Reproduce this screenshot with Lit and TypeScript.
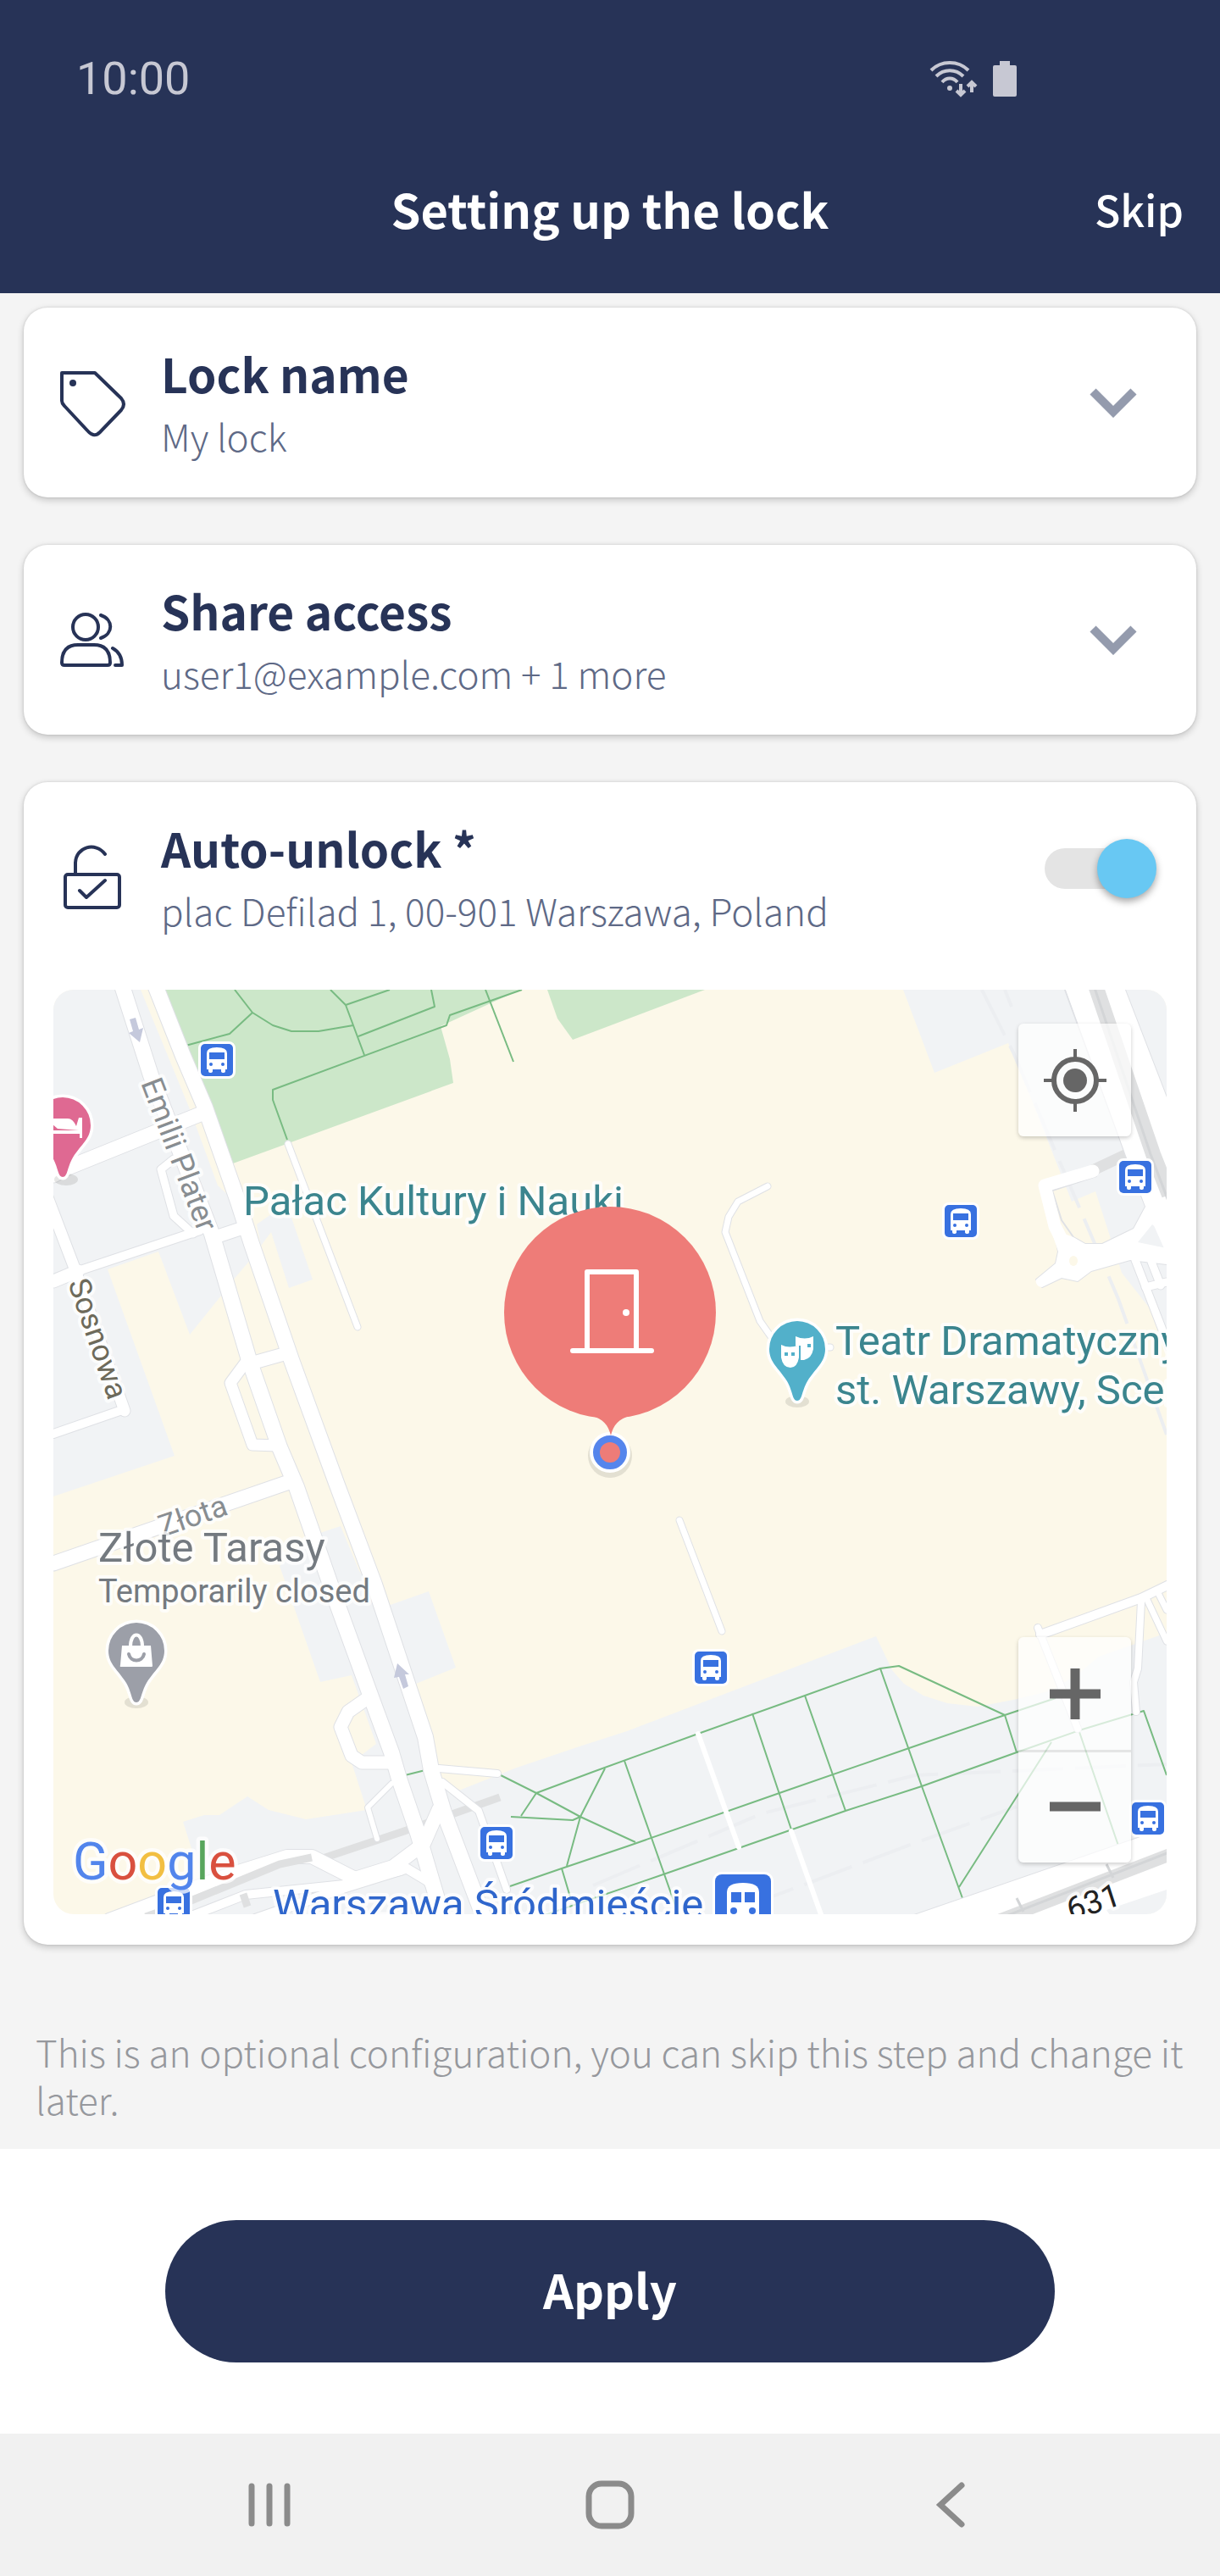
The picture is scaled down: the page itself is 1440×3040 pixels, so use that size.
import { LitElement, html, css, svg } from "lit";
import { customElement, property, state } from "lit/decorators.js";

const tagIcon = svg`
  <path d="M3 5V38Q3 41 6 44L34 74Q41 82 48 75L73 49Q79 42 73 35L42 5Z" />
  <circle class="dot" cx="16" cy="17" r="4" />`;

const peopleIcon = svg`
  <circle cx="31" cy="25" r="15" />
  <path d="M6 70H57Q60 70 60 67Q60 46 41 46H22Q3 46 3 67Q3 70 6 70Z" />
  <path d="M49 11C64 16 64 33 49 38M63 50Q74 56 74 70H66" />`;

const lockIcon = svg`
  <rect x="7" y="37" width="64" height="39" rx="3" />
  <path d="M19 37V24C19 4 43 -2 54 13M24 56L32 64L54 44" />`;

@customElement("setting-card")
export class SettingCard extends LitElement {
  @property() heading = "";
  @property() detail = "";
  @property({ attribute: false }) icon: unknown = null;
  @property({ type: Boolean }) toggle = false;
  @state() private checked = true;

  static styles = css`
    :host {
      display: block;
      background: #fff;
      border-radius: 28px;
      box-shadow: 0 3px 8px rgba(0, 0, 0, 0.2), 0 0 3px rgba(0, 0, 0, 0.12);
    }
    .row {
      display: flex;
      align-items: center;
      gap: 40px;
      width: 100%;
      box-sizing: border-box;
      padding: 38px 70px 38px 42px;
      border: 0;
      background: none;
      font: inherit;
      color: #273357;
      text-align: left;
    }
    .row.switchable {
      padding-right: 47px;
    }
    .icon {
      flex: none;
      width: 80px;
      height: 80px;
      overflow: visible;
      fill: none;
      stroke: #273357;
      stroke-width: 4px;
      stroke-linecap: round;
      stroke-linejoin: round;
    }
    .dot {
      fill: #273357;
      stroke: none;
    }
    .texts {
      flex: 1;
      display: flex;
      flex-direction: column;
    }
    .heading {
      font-size: 55px;
      line-height: 78px;
      font-weight: 600;
    }
    .detail {
      font-size: 44px;
      line-height: 70px;
      font-weight: 300;
      color: #5e6986;
    }
    .chevron {
      flex: none;
      width: 56px;
      height: 36px;
      fill: none;
      stroke: #949bad;
      stroke-width: 10px;
    }
    .switch {
      display: flex;
      padding-bottom: 20px;
    }
    .switch input {
      appearance: none;
      margin: 0;
      display: flex;
      align-items: center;
      width: 132px;
      height: 70px;
    }
    .switch input::before {
      content: "";
      flex: none;
      width: 124px;
      height: 48px;
      border-radius: 24px;
      background: #e4e4e4;
    }
    .switch input::after {
      content: "";
      flex: none;
      width: 70px;
      height: 70px;
      margin-left: -124px;
      border-radius: 50%;
      background: #fafafa;
      box-shadow: 0 4px 8px rgba(0, 0, 0, 0.35);
    }
    .switch input:checked::after {
      margin-left: -62px;
      background: #68c8f3;
    }
  `;

  render() {
    const body = html`
      <svg class="icon" viewBox="0 0 80 80" aria-hidden="true">${this.icon}</svg>
      <span class="texts">
        <span class="heading">${this.heading}</span>
        <span class="detail">${this.detail}</span>
      </span>`;
    if (!this.toggle) {
      return html`<button class="row" type="button" aria-expanded="false">
        ${body}
        <svg class="chevron" viewBox="0 0 56 36" aria-hidden="true"><path d="M4 5L28 29L52 5" /></svg>
      </button>`;
    }
    return html`<div class="row switchable">
        ${body}
        <label class="switch"
          ><input
            type="checkbox"
            aria-label=${this.heading}
            .checked=${this.checked}
            @change=${(e: Event) => (this.checked = (e.target as HTMLInputElement).checked)}
        /></label>
      </div>
      <slot></slot>`;
  }
}

const busStops: [number, number][] = [
  [256, 1251],
  [1134, 1441],
  [1340, 1389],
  [839, 1968],
  [1355, 2146],
  [586, 2175],
  [205, 2247],
];

const footpaths = [
  "M277 1168L298 1195L322 1210L344 1217H376L417 1210",
  "M298 1195L271 1220L219 1234",
  "M390 1168L408 1186L430 1245M408 1186L460 1168M509 1168L513 1188L423 1223",
  "M616 1168L531 1198L527 1210L322 1286V1298L339 1345",
  "M573 1168L606 1253",
  "M602 2226L663 2205L740 2179L920 2116L1073 2063L1186 2024L1246 2004",
  "M633 2116L700 2091L824 2046L950 2001L1039 1969L1061 1966L1186 2024L1200 2068",
  "M643 2260L783 2212L872 2181L998 2137L1088 2108L1200 2068L1274 2042L1350 2019L1377 2095",
  "M737 2078L769 2169L801 2260M888 2022L934 2159M950 2001L998 2137",
  "M1039 1969L1088 2108L1136 2240M1132 2227L1241 2056M1274 2044L1320 2178",
  "M587 2093L633 2116L685 2144L750 2174M714 2087L685 2144L669 2202",
  "M633 2116L615 2143M603 2144L676 2148L685 2144M663 2205L674 2242M478 2095L502 2089",
];

// Each road is a centre line with its width.
const roads: [string, number][] = [
  ["M63 1387L80 1378L236 1315", 17],
  ["M63 1512L98 1498L236 1452", 10],
  ["M63 1512L92 1500M254 1460L290 1448M303 1607L335 1598", 15],
  ["M55 1410L87 1494L147 1665", 13],
  ["M147 1663L63 1692", 10],
  ["M205 1368L190 1380L205 1435L228 1456", 9],
  ["M292 1605L272 1632L298 1705L328 1706", 13],
  ["M340 1350L422 1566", 7],
  ["M63 1845L344 1748", 17],
  ["M431 2006L411 2020L402 2038L415 2072L427 2080H462", 15],
  ["M462 2105L434 2133L445 2170", 6],
  ["M518 2087L587 2093M522 2103L565 2137L598 2230", 8],
  ["M129 2266L272 2212L339 2191H368L419 2217L464 2203L500 2176L518 2135", 16],
  ["M190 2275L290 2236L406 2224L473 2208", 10],
  ["M300 2265L406 2228L480 2205L505 2220L520 2245", 11],
  ["M143 1160L178 1269L250 1456L294 1605L330 1708L350 1755L397 1890L437 2000L462 2068L471 2099L493 2163L524 2268", 18],
  ["M182 1160L216 1246L242 1307L281 1418L297 1468L344 1605L397 1750L442 1870L502 2050L509 2089L524 2139L573 2268", 18],
  ["M906 1400L871 1418L860 1436L856 1454L897 1559L916 1586", 7],
  ["M920 1590H980", 7],
  ["M802 1794L852 1925", 7],
  ["M1228 1929L1347 1886L1380 1870", 10],
  ["M1225 1921L1272 2040", 8],
  ["M1347 1890L1343 1969L1338 1985L1341 2020", 8],
  ["M1354 1888L1377 1937M1366 1878L1377 1900", 7],
  ["M1340 1487L1380 1590M1359 1489L1370 1517", 9],
  ["M1352 1519L1377 1513", 9],
];

const pinShape = "M0 61C-6 61 -5 50 -12 38C-22 22 -33 16 -33 0A33 33 0 0 1 33 0C33 16 22 22 12 38C5 50 6 61 0 61Z";

@customElement("area-map")
export class AreaMap extends LitElement {
  static styles = css`
    :host {
      display: block;
      position: relative;
      overflow: hidden;
      border-radius: 24px;
    }
    .canvas {
      display: block;
      width: 100%;
      height: auto;
      font-family: Roboto, sans-serif;
    }
    .grey { fill: #f1f3f5; }
    .cream { fill: #fcf8e9; }
    .park { fill: #cce7c9; }
    .white { fill: #fff; }
    .casing, .road {
      fill: none;
      stroke-linejoin: round;
      stroke-linecap: round;
    }
    .casing { stroke: #dfe1e5; }
    .road { stroke: #fff; }
    .rail { fill: none; stroke: #dfe0e1; }
    .railcore { fill: none; stroke: #d3d5d7; stroke-width: 3px; }
    .faint { fill: none; stroke: #eceef1; stroke-width: 4px; stroke-dasharray: 60 14; }
    .footpath { fill: none; stroke: #78bb82; stroke-width: 2px; stroke-linejoin: round; }
    .arrow { fill: #c5c9dc; }
    .stop { fill: #3871e0; stroke: #fff; stroke-width: 6px; paint-order: stroke; }
    .blue { fill: #3871e0; }
    .pin { stroke: #fff; stroke-width: 7px; paint-order: stroke; }
    .teal { fill: #52b0ca; }
    .slate { fill: #9c9fa8; }
    .pink { fill: #df6992; }
    .shade { fill: rgba(80, 80, 70, 0.14); }
    .bagline { fill: none; stroke: #fff; stroke-width: 4px; }
    .smile { fill: none; stroke: #9c9fa8; stroke-width: 4px; stroke-linecap: round; }
    .label {
      font-size: 49px;
      stroke: rgba(255, 255, 255, 0.75);
      stroke-width: 8px;
      stroke-linejoin: round;
      paint-order: stroke;
    }
    .label.sub { font-size: 38px; }
    .label.street { font-size: 36px; }
    .place { fill: #3b858e; }
    .closed { fill: #747a80; }
    .muted { fill: #888d91; }
    .olive { fill: #6d6a5b; }
    .station { fill: #2f66cc; }
    .label.number { font-size: 38px; fill: #222; }
    .label.google { font-size: 61px; stroke-width: 9px; }
    .g1 { fill: #5285ec; }
    .g2 { fill: #d9503f; }
    .g3 { fill: #f2bf42; }
    .g4 { fill: #58a55c; }
    .marker { fill: #ee7c78; }
    .door { fill: none; stroke: #fff; stroke-width: 6px; stroke-linecap: round; stroke-linejoin: round; }
    .ring { fill: #5585ec; stroke: #fff; stroke-width: 4px; }
    .controls {
      position: absolute;
      top: 40px;
      bottom: 61px;
      right: 42px;
      display: flex;
      flex-direction: column;
      justify-content: space-between;
    }
    .group {
      display: flex;
      flex-direction: column;
      border-radius: 6px;
      background: rgba(255, 255, 255, 0.7);
      box-shadow: 0 2px 5px rgba(0, 0, 0, 0.2);
    }
    .control {
      display: block;
      width: 133px;
      height: 133px;
      padding: 0;
      border: 0;
      background: none;
    }
    .control + .control {
      border-top: 3px solid rgba(0, 0, 0, 0.09);
    }
    .glyph {
      display: block;
      margin: auto;
      width: 76px;
      height: 76px;
      fill: none;
      stroke: #666;
    }
    .core { fill: #666; stroke: none; }
  `;

  private stop([x, y]: [number, number]) {
    return svg`<g transform="translate(${x} ${y})">
      <rect class="stop" x="-19" y="-19" width="38" height="38" rx="5" />
      <path class="white" d="M-12 -8Q-12 -15 0 -15Q12 -15 12 -8V11H10V13Q10 15 8 15Q5 15 5 13V11H-5V13Q-5 15 -8 15Q-10 15 -10 13V11H-12Z" />
      <rect class="blue" x="-9" y="-9" width="18" height="8" />
      <circle class="blue" cx="-7" cy="5" r="2" /><circle class="blue" cx="7" cy="5" r="2" />
    </g>`;
  }

  render() {
    return html`
      <svg class="canvas" viewBox="63 1168 1314 1091" role="img" aria-label="Map of Pałac Kultury i Nauki, Warszawa">
        <rect class="cream" x="63" y="1168" width="1314" height="1092" />
        <path class="grey" d="M63 1168H166L224 1309L257 1399L290 1430L297 1485L274 1512L261 1529L224 1575L187 1477L127 1498L206 1718L63 1766Z" />
        <path class="grey" d="M303 1445L320 1433L344 1437L369 1510L341 1520L320 1454L308 1470Z" />
        <path class="grey" d="M216 2150L241 2142H259L292 2120L317 2136L361 2147L433 2136L415 2080L444 2058L415 1977L378 1985L330 1848L366 1813L402 1801L424 1854L455 1896L506 1878L538 1968L486 1989L504 2056L513 2084L531 2117L607 2087L687 2060L740 2043L1034 1931L1053 1971L1067 1987L1090 2001L1118 2010L1154 2014L1196 2006L1242 1995L1278 1971L1297 1955L1377 1927V2260H170L240 2225Z" />
        <path class="cream" d="M518 2088L607 2087L531 2117Z" />
        <path class="grey" d="M1066 1168L1103 1266L1190 1231L1200 1253L1265 1418L1293 1406L1313 1468L1324 1502L1357 1544L1377 1571V1168Z" />
        <path class="park" d="M190 1168H614L520 1211L531 1250L535 1278L275 1373L252 1309Z" />
        <path class="park" d="M646 1168L658 1202L676 1227L832 1168Z" />
        <path class="faint" d="M1159 1168L1196 1242L1320 1533L1377 1693M1186 1168L1194 1188" />
        <path class="faint" d="M700 2225L900 2140L1080 2095L1377 2082M880 2250L1080 2175L1200 2132" />
        <path class="rail" stroke-width="9" d="M590 2121L477 2161L375 2195" />
        <path class="rail" stroke-width="13" d="M1377 1340L1290 1381" />
        ${footpaths.map((d) => svg`<path class="footpath" d=${d} />`)}
        ${roads.map(([d, w]) => svg`<path class="casing" stroke-width=${w + 2} d=${d} />`)}
        <path class="casing" stroke-width="2" d="M1257 1168L1329 1364L1352 1424L1338 1450L1301 1468H1281L1267 1460L1253 1440L1242 1405L1294 1388M1328 1168L1377 1295M1235 1399L1249 1477L1246 1491L1223 1510L1230 1519L1253 1508L1272 1512L1288 1500L1334 1487L1377 1492" />
        ${roads.map(([d, w]) => svg`<path class="road" stroke-width=${w} d=${d} />`)}
        <path class="rail" stroke-width="9" d="M368 2192L330 2200L228 2242L172 2262M287 2235L292 2250" />
        <path class="white" d="M1258 1168H1328L1377 1295V1480L1352 1424L1329 1364Z" />
        <path class="road" stroke-width="15" d="M1290 1382L1233 1399L1245 1447L1262 1480" />
        <path class="white" d="M1240 1450L1249 1477L1246 1491L1223 1510A7 7 0 0 0 1230 1519L1253 1508L1272 1512L1288 1500L1334 1487L1377 1492V1473L1343 1466L1360 1445L1377 1460V1440L1352 1424L1338 1450L1301 1468H1281L1267 1460Z" />
        <ellipse class="cream" cx="1267" cy="1488" rx="5" ry="6" />
        <path class="rail" stroke-width="18" d="M1292 1160L1361 1362L1380 1410" />
        <path class="railcore" d="M1290 1160L1358 1362L1380 1420" />
        <path class="casing" stroke-width="2" d="M1079 2260L1343 2169L1377 2156" />
        <path class="white" d="M1079 2260L1343 2169L1377 2156V2260Z" />
        <path class="rail" stroke-width="15" d="M1180 2266L1380 2189" />
        <path class="railcore" d="M1180 2264L1380 2186M1200 2240L1208 2256M1306 2200L1314 2216" />
        <path class="grey" d="M1306 2254L1377 2230V2260H1310Z" />
        <path class="road" stroke-width="6" d="M824 2046L872 2180M934 2161L970 2262" />
        <path class="arrow" d="M153 1203L160 1201L164 1215L169 1213L165 1230L152 1219L157 1217Z" />
        <path class="arrow" d="M476 1993L482 1990L478 1976L483 1976L469 1963L465 1980L471 1979Z" />

        ${busStops.map((p) => this.stop(p))}
        <rect class="stop" x="844" y="2212" width="66" height="66" rx="8" />
        <path class="white" d="M858 2262V2233Q858 2222 877 2222Q896 2222 896 2233V2262Z" />
        <path class="blue" d="M863 2233H875V2245H863ZM879 2233H891V2245H879Z" />
        <circle class="blue" cx="866" cy="2255" r="4" /><circle class="blue" cx="888" cy="2255" r="4" />

        <ellipse class="shade" cx="941" cy="1654" rx="14" ry="7" />
        <g transform="translate(941 1592)">
          <path class="pin teal" d=${pinShape} />
          <path class="white" d="M-2 -15Q9 -10 19 -15V0Q17 11 8 13L4 13V-4H-2Z" />
          <path class="white" d="M-19 3Q-9 8 2 3V18Q0 30 -8 30Q-17 30 -19 18Z" transform="translate(0 -8)" />
          <path class="teal" d="M-15 4H-11V8H-15ZM-7 4H-3V8H-7ZM12 -6H16V-2H12Z" />
        </g>
        <ellipse class="shade" cx="161" cy="2009" rx="14" ry="7" />
        <g transform="translate(161 1948)">
          <path class="pin slate" d=${pinShape} />
          <path class="white" d="M-17 -6H17L19 18Q19 19 18 19H-18Q-20 19 -19 17Z" />
          <path class="bagline" d="M-7 -5C-7 -23 7 -23 7 -5" />
          <path class="smile" d="M-9 4C-7 14 7 14 9 4" />
        </g>
        <ellipse class="shade" cx="78" cy="1392" rx="14" ry="7" />
        <g transform="translate(74 1328)">
          <path class="pin pink" d=${pinShape} />
          <path class="white" d="M-20 -8H6Q12 -8 16 1L19 -9H23V15H20V10H-20V6H19L-6 4Z" />
        </g>

        <text class="label street muted" transform="translate(166 1278) rotate(69)">Emilii Plater</text>
        <text class="label street olive" transform="translate(80 1514) rotate(71)">Sosnowa</text>
        <text class="label street muted" transform="translate(192 1814) rotate(-19)">Złota</text>
        <text class="label place" x="287" y="1434">Pałac Kultury i Nauki</text>
        <text class="label place" x="986" y="1599">Teatr Dramatyczny m.</text>
        <text class="label place" x="986" y="1657">st. Warszawy, Scena</text>
        <text class="label closed" x="116" y="1843">Złote Tarasy</text>
        <text class="label sub closed" x="116" y="1891">Temporarily closed</text>
        <text class="label station" x="322" y="2264">Warszawa Śródmieście</text>
        <text class="label number" transform="translate(1264 2267) rotate(-18)">631</text>
        <text class="label google" x="86" y="2218"><tspan class="g1">G</tspan><tspan class="g2">o</tspan><tspan class="g3">o</tspan><tspan class="g1">g</tspan><tspan class="g4">l</tspan><tspan class="g2">e</tspan></text>

        <circle class="shade" cx="720" cy="1718" r="26" />
        <circle class="ring" cx="720" cy="1714" r="22" />
        <circle class="marker" cx="720" cy="1714" r="12" />
        <circle class="marker" cx="720" cy="1549" r="125" />
        <path class="marker" d="M698 1671C712 1674 718 1682 721 1694C724 1682 730 1674 744 1671Z" />
        <path class="door" d="M676 1594H769M693 1594V1501H751V1594" />
        <circle class="white" cx="739" cy="1549" r="4" />
      </svg>
      <div class="controls">
        <div class="group">
          <button class="control" type="button" aria-label="My location">
            <svg class="glyph" viewBox="0 0 76 76">
              <circle cx="38" cy="38" r="25" stroke-width="6" />
              <circle class="core" cx="38" cy="38" r="14" />
              <path stroke-width="4" d="M38 1V12M38 64V75M1 38H12M64 38H75" />
            </svg>
          </button>
        </div>
        <div class="group">
          <button class="control" type="button" aria-label="Zoom in">
            <svg class="glyph" viewBox="0 0 76 76"><path stroke-width="11" d="M38 8V68M8 38H68" /></svg>
          </button>
          <button class="control" type="button" aria-label="Zoom out">
            <svg class="glyph" viewBox="0 0 76 76"><path stroke-width="11" d="M8 37H68" /></svg>
          </button>
        </div>
      </div>
    `;
  }
}

@customElement("app-root")
export class AppRoot extends LitElement {
  static styles = css`
    :host {
      display: flex;
      flex-direction: column;
      min-height: 100vh;
      background: #f4f4f4;
      font-family: "Noto Sans CJK SC", "Open Sans", sans-serif;
    }
    .top {
      background: #273357;
      color: #fff;
    }
    .status {
      display: flex;
      align-items: center;
      gap: 18px;
      padding: 40px 240px 0 90px;
      font-family: Roboto, sans-serif;
      font-size: 54px;
      line-height: 106px;
      color: #c7c8d3;
    }
    .time {
      flex: 1;
    }
    .wifi {
      width: 58px;
      height: 44px;
      fill: none;
      stroke: #c7c8d3;
      stroke-width: 4px;
    }
    .solid {
      fill: #c7c8d3;
      stroke: none;
    }
    .battery {
      width: 28px;
      height: 44px;
    }
    .bar {
      display: grid;
      grid-template-columns: 1fr auto 1fr;
      align-items: center;
      padding: 0 43px;
      line-height: 200px;
    }
    .title {
      grid-column: 2;
      margin: 0;
      font-size: 56px;
      font-weight: 700;
    }
    .skip {
      justify-self: end;
      padding: 0;
      border: 0;
      background: none;
      color: #fff;
      font: inherit;
      font-size: 50px;
      font-weight: 500;
    }
    .cards {
      display: flex;
      flex-direction: column;
      gap: 56px;
      padding: 17px 28px 0;
    }
    .place {
      padding: 21px 35px 36px;
    }
    .note {
      flex: 1;
      margin: 0;
      padding: 98px 42px 30px;
      font-size: 44px;
      line-height: 56px;
      font-weight: 300;
      color: #96989d;
    }
    .actions {
      display: flex;
      background: #fff;
      padding: 84px 195px;
    }
    .apply {
      flex: 1;
      height: 168px;
      padding: 0 0 8px;
      border: 0;
      border-radius: 84px;
      background: #273357;
      color: #fff;
      font: inherit;
      font-size: 56px;
      font-weight: 700;
    }
    .nav {
      display: grid;
      grid-template-columns: repeat(3, 1fr);
      justify-items: center;
      padding: 52px 117px;
      background: #f1f1f1;
    }
    .key {
      display: block;
      padding: 0;
      border: 0;
      background: none;
    }
    .key svg {
      display: block;
      width: 64px;
      height: 64px;
      fill: none;
      stroke: #8b8b8b;
      stroke-width: 7px;
      stroke-linecap: round;
    }
  `;

  render() {
    return html`
      <header class="top">
        <div class="status">
          <span class="time">10:00</span>
          <svg class="wifi" viewBox="0 0 58 44" aria-hidden="true">
            <path d="M3 12C15 0 35 0 47 12M9 19C18 10 32 10 41 19M16 26C21 20 29 20 34 26" />
            <circle class="solid" cx="25" cy="33" r="3" />
            <path d="M38 28V41M33 36L38 41L43 36M51 38V26M46 31L51 26L56 31" />
          </svg>
          <svg class="battery" viewBox="0 0 28 44" aria-hidden="true">
            <path class="solid" d="M8 1H20V6H26Q28 6 28 8V41Q28 43 26 43H2Q0 43 0 41V8Q0 6 2 6H8Z" />
          </svg>
        </div>
        <div class="bar">
          <h1 class="title">Setting up the lock</h1>
          <button class="skip" type="button">Skip</button>
        </div>
      </header>
      <main class="cards">
        <setting-card heading="Lock name" detail="My lock" .icon=${tagIcon}></setting-card>
        <setting-card heading="Share access" detail="user1@example.com + 1 more" .icon=${peopleIcon}></setting-card>
        <setting-card heading="Auto-unlock *" detail="plac Defilad 1, 00-901 Warszawa, Poland" .icon=${lockIcon} toggle>
          <div class="place"><area-map></area-map></div>
        </setting-card>
      </main>
      <p class="note">This is an optional configuration, you can skip this step and change it later.</p>
      <div class="actions"><button class="apply" type="button">Apply</button></div>
      <nav class="nav" aria-label="System">
        <button class="key" type="button" aria-label="Recent apps">
          <svg viewBox="0 0 64 64"><path d="M11 10V54M32 10V54M53 10V54" /></svg>
        </button>
        <button class="key" type="button" aria-label="Home">
          <svg viewBox="0 0 64 64"><rect x="7" y="7" width="50" height="50" rx="15" /></svg>
        </button>
        <button class="key" type="button" aria-label="Back">
          <svg viewBox="0 0 64 64"><path d="M45 9L20 32L45 55" /></svg>
        </button>
      </nav>
    `;
  }
}
